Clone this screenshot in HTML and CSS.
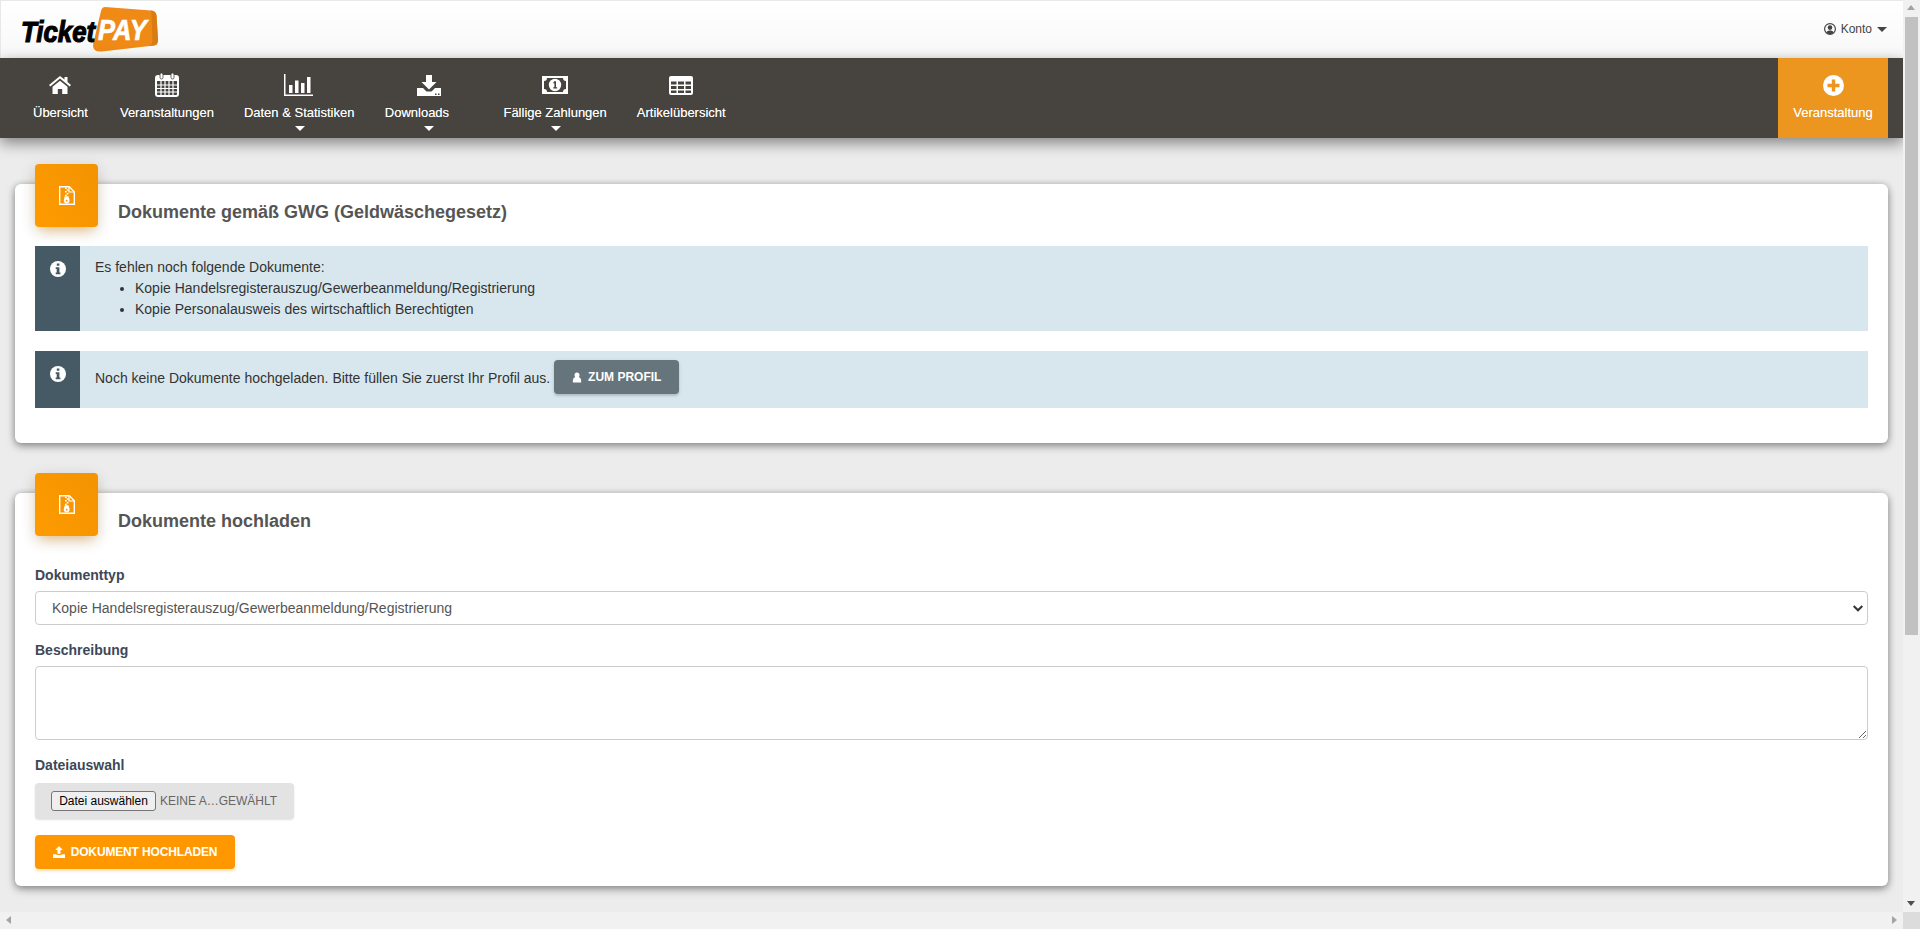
FILE: index.html
```html
<!DOCTYPE html>
<html lang="de">
<head>
<meta charset="utf-8">
<title>TicketPAY – Dokumente</title>
<link rel="stylesheet" href="styles.css">
</head>
<body>
<svg class="defs" width="0" height="0" aria-hidden="true">
  <symbol id="i-zip" viewBox="0 0 16 19">
    <path fill="none" stroke="currentColor" stroke-width="1.4" d="M.7.7h9.600l5 5v12.600H.7z"/>
    <path fill="none" stroke="currentColor" stroke-width="1.200" d="M10 1v5h5"/>
    <path fill="currentColor" d="M6 1.500h1.700v1.500H6zM7.700 3.300h1.700v1.500H7.700zM6 5.100h1.700v1.500H6zM7.700 6.900h1.700v1.500H7.700zM6 8.700h1.700v1.300H6z"/>
    <path fill="currentColor" d="M5.800 10.200h3.700l1 3.800a2.900 2.900 0 1 1-5.700 0z"/>
    <circle cx="7.650" cy="14.700" r=".9" fill="#fb9800"/>
  </symbol>
  <symbol id="i-info" viewBox="0 0 16 16">
    <circle cx="8" cy="8" r="8" fill="#fff"/>
    <path fill="#465a65" d="M6.800 2.600h2.600v2.200H6.800zM5.700 6.200h3.700v5.300h1v1.700H5.700v-1.700h1V7.900h-1z"/>
  </symbol>
  <symbol id="i-user" viewBox="0 0 12 12">
    <circle cx="6" cy="3" r="3" fill="currentColor"/>
    <path fill="currentColor" d="M1 12V9.500C1 7.500 2.500 6 4 5.500h4C9.500 6 11 7.500 11 9.500V12z"/>
  </symbol>
  <symbol id="i-upload" viewBox="0 0 12 12">
    <path fill="currentColor" d="M6 0l3.800 4H7.500v3.800h-3V4H2.200zM0 8.200h3.500v.8h5v-.8H12V12H0z"/>
  </symbol>
</svg>

<div class="frame">
  <div class="viewport">
    <header class="topbar">
      <a class="logo" href="#" aria-label="TicketPAY">
        <svg width="145" height="50" viewBox="0 0 145 50">
          <path fill="#ef8a17" d="M88 2 134 5.500q5 .5 5.500 5L141 35q0 5-4 5.500L85 46.500q-9 .8-9-6 0-2 1-5L84 6q1-4 4-4z"/>
          <path fill="#d97c12" d="M134 5.500q5 .5 5.500 5L141 35q0 5-4 5.500l-6 .7q4-.7 4.500-5L134.500 10q0-3-.5-4.500z"/>
          <text class="logo-ticket" transform="translate(4 37) scale(.86 1)">Ticket</text>
          <text class="logo-pay" transform="translate(81 35) scale(.88 1)">PAY</text>
        </svg>
      </a>
      <a class="account" href="#">
        <svg class="account-icon" width="12" height="12" viewBox="0 0 12 12"><circle cx="6" cy="6" r="5.400" fill="none" stroke="currentColor" stroke-width="1.200"/><circle cx="6" cy="4.600" r="2.300" fill="currentColor"/><path fill="currentColor" d="M2.300 9.600C3 7.800 4.500 7.400 6 7.400s3 .4 3.700 2.200C8.700 10.700 7.400 11.200 6 11.200s-2.700-.5-3.700-1.600z"/></svg>
        <span>Konto</span>
        <span class="caret-dark"></span>
      </a>
    </header>

    <nav class="mainnav">
      <div class="nav-items">
        <a class="nav-item nav-first" href="#">
          <span class="nav-icon"><svg width="22" height="18" viewBox="0 0 22 18"><path fill="#fff" d="M11 0 0 9l1.300 1.500L11 2.600l9.700 7.900L22 9l-3.500-2.900V1h-3v2.600z"/><path fill="#fff" d="M3.500 10.800 11 4.700l7.500 6.100V18h-5.300v-5H8.800v5H3.500z"/></svg></span>
          <span class="nav-label">Übersicht</span>
        </a>
        <a class="nav-item" href="#">
          <span class="nav-icon"><svg width="24" height="24" viewBox="0 0 24 24"><rect x="1" y="3" width="22" height="20" rx="2" fill="none" stroke="#fff" stroke-width="2"/><rect x="1" y="3" width="22" height="5" fill="#fff"/><path fill="none" stroke="#fff" stroke-width="1.200" d="M2 12h20M2 15.500h20M2 19h20M6 8v14M10 8v14M14 8v14M18 8v14"/><rect x="5" y="0" width="3" height="6" rx="1.500" fill="#fff" stroke="#47433e" stroke-width=".8"/><rect x="16" y="0" width="3" height="6" rx="1.500" fill="#fff" stroke="#47433e" stroke-width=".8"/></svg></span>
          <span class="nav-label">Veranstaltungen</span>
        </a>
        <a class="nav-item" href="#">
          <span class="nav-icon"><svg width="30" height="22" viewBox="0 0 30 22"><path fill="#fff" d="M0 0h1.500v20.500H29V22H0z"/><path fill="#fff" d="M5 11h3.500v8H5zM11 6.500h3.500V19H11zM17 9h3.500v10H17zM23 3h3.500v16H23z"/></svg></span>
          <span class="nav-label">Daten &amp; Statistiken</span>
          <span class="caret-light"></span>
        </a>
        <a class="nav-item nav-wide" href="#">
          <span class="nav-icon"><svg width="24" height="21" viewBox="0 0 24 21"><path fill="#fff" d="M9 0h6v7h4.500L12 14.500 4.500 7H9z"/><path fill="#fff" d="M0 13h6l3.500 3.500h5L18 13h6v8H0z"/><path fill="#47433e" d="M18 18.500h1.500V20H18zM21 18.500h1.500V20H21z"/></svg></span>
          <span class="nav-label nav-label-shift">Downloads</span>
          <span class="caret-light"></span>
        </a>
        <a class="nav-item" href="#">
          <span class="nav-icon"><svg width="26" height="18" viewBox="0 0 26 18"><path fill="#fff" fill-rule="evenodd" d="M0 0h26v18H0zM2 5v8a3 3 0 0 1 3 3h16a3 3 0 0 1 3-3V5a3 3 0 0 1-3-3H5a3 3 0 0 1-3 3z"/><circle cx="13" cy="9" r="6.200" fill="#fff"/><path fill="#47433e" d="M12.300 5.300h1.700v6h1.100v1.200h-3.800v-1.200h1.100V7.300h-1.100v-.9z"/></svg></span>
          <span class="nav-label">Fällige Zahlungen</span>
          <span class="caret-light"></span>
        </a>
        <a class="nav-item" href="#">
          <span class="nav-icon"><svg width="24" height="19" viewBox="0 0 24 19"><path fill="#fff" fill-rule="evenodd" d="M2 0h20a2 2 0 0 1 2 2v15a2 2 0 0 1-2 2H2a2 2 0 0 1-2-2V2a2 2 0 0 1 2-2zM2 5.500v3h5.500v-3zM9 5.500v3h6v-3zM16.500 5.500v3H22v-3zM2 10v3h5.500v-3zM9 10v3h6v-3zM16.500 10v3H22v-3zM2 14.500V17h5.500v-2.500zM9 14.500V17h6v-2.500zM16.500 14.500V17H22v-2.500z"/></svg></span>
          <span class="nav-label">Artikelübersicht</span>
        </a>
      </div>
      <a class="nav-cta" href="#">
        <span class="nav-icon"><svg width="21" height="21" viewBox="0 0 21 21"><circle cx="10.500" cy="10.500" r="10.500" fill="#fff"/><path fill="#ec951f" d="M8.800 4.500h3.400v4.300h4.300v3.400h-4.300v4.300H8.800v-4.300H4.500V8.800h4.300z"/></svg></span>
        <span class="nav-label">Veranstaltung</span>
      </a>
    </nav>

    <main class="content">
      <section class="card card-status">
        <div class="card-head">
          <div class="card-badge"><svg width="16" height="19"><use href="#i-zip"/></svg></div>
          <h2 class="card-title">Dokumente gemäß GWG (Geldwäschegesetz)</h2>
        </div>
        <div class="alert alert-list">
          <div class="alert-side"><svg width="16" height="16"><use href="#i-info"/></svg></div>
          <div class="alert-body">
            Es fehlen noch folgende Dokumente:
            <ul class="alert-ul">
              <li>Kopie Handelsregisterauszug/Gewerbeanmeldung/Registrierung</li>
              <li>Kopie Personalausweis des wirtschaftlich Berechtigten</li>
            </ul>
          </div>
        </div>
        <div class="alert alert-action">
          <div class="alert-side"><svg width="16" height="16"><use href="#i-info"/></svg></div>
          <div class="alert-body alert-row">
            <span>Noch keine Dokumente hochgeladen. Bitte füllen Sie zuerst Ihr Profil aus.</span>
            <a class="btn btn-grey" href="#"><svg width="10" height="11"><use href="#i-user"/></svg>ZUM PROFIL</a>
          </div>
        </div>
      </section>

      <section class="card card-upload">
        <div class="card-head">
          <div class="card-badge"><svg width="16" height="19"><use href="#i-zip"/></svg></div>
          <h2 class="card-title">Dokumente hochladen</h2>
        </div>
        <form class="upload-form">
          <label class="field-label" for="doctype">Dokumenttyp</label>
          <div class="select-wrap">
            <select class="field-select" id="doctype">
              <option>Kopie Handelsregisterauszug/Gewerbeanmeldung/Registrierung</option>
            </select>
            <svg class="select-chevron" width="10" height="7" viewBox="0 0 10 7"><path fill="none" stroke="#333" stroke-width="2" d="M.7 1 5 5.300 9.300 1"/></svg>
          </div>
          <label class="field-label field-gap" for="desc">Beschreibung</label>
          <textarea class="field-area" id="desc"></textarea>
          <span class="field-label field-gap field-file-label">Dateiauswahl</span>
          <div class="file-box">
            <button class="file-btn" type="button">Datei auswählen</button>
            <span class="file-name">Keine a…gewählt</span>
          </div>
          <a class="btn btn-orange" href="#"><svg width="12" height="12"><use href="#i-upload"/></svg>DOKUMENT HOCHLADEN</a>
        </form>
      </section>
    </main>
  </div>

  <div class="vscroll">
    <span class="arrow-up"></span>
    <div class="vtrack"><div class="vthumb"></div></div>
    <span class="arrow-down"></span>
  </div>
  <div class="hscroll">
    <span class="arrow-left"></span>
    <span class="arrow-right"></span>
  </div>
  <div class="corner"></div>
</div>
</body>
</html>
```

FILE: styles.css
```css
* { box-sizing: border-box; }
html, body { margin: 0; height: 100%; overflow: hidden; }
body {
  font-family: "Liberation Sans", Arial, sans-serif;
  font-size: 14px;
  color: #333;
  background: #ececec;
}
a { text-decoration: none; color: inherit; }
.defs { position: absolute; }

.frame {
  display: grid;
  grid-template-columns: 1903px 17px;
  grid-template-rows: 912px 17px;
  height: 929px;
}
.viewport { overflow: hidden; display: flex; flex-direction: column; }

/* top bar */
.topbar {
  height: 58px;
  flex: none;
  display: flex;
  align-items: center;
  justify-content: space-between;
  border-top: 1px solid #e8e8e8;
  border-left: 1px solid #e8e8e8;
  background: linear-gradient(#fff, #f8f8f8);
  padding: 0 16px 0 16px;
}
.logo { display: block; height: 50px; margin-top: 1px; }
.logo svg { display: block; }
.logo-ticket { font: italic 700 30px "Liberation Sans", Arial, sans-serif; fill: #000; stroke: #000; stroke-width: 1.2; }
.logo-pay { font: italic 700 29px "Liberation Sans", Arial, sans-serif; fill: #fff; stroke: #fff; stroke-width: .7; }
.account { display: flex; align-items: center; font-size: 12px; color: #444; margin-bottom: 1px; }
.account-icon { margin-right: 5px; color: #444; }
.caret-dark {
  margin-left: 5px;
  margin-top: 1px;
  border: 5px solid transparent;
  border-top-color: #444;
  border-bottom: 0;
}

/* main nav */
.mainnav {
  height: 80px;
  flex: none;
  display: flex;
  justify-content: space-between;
  padding: 0 15px 0 18px;
  background: #47433e;
  box-shadow: 0 5px 14px rgba(0, 0, 0, .45);
  position: relative;
  z-index: 2;
  color: #fff;
}
.nav-items { display: flex; }
.nav-item {
  display: flex;
  flex-direction: column;
  align-items: center;
  padding: 15px 15px 0;
}
.nav-first { margin-right: 2px; }
.nav-wide { width: 119px; padding-left: 0; padding-right: 0; }
.nav-icon { height: 24px; display: flex; align-items: center; justify-content: center; }
.nav-icon svg { display: block; }
.nav-label {
  margin-top: 8px;
  line-height: 16px;
  font-size: 13px;
  white-space: nowrap;
  text-shadow: 0 0 .6px rgba(255, 255, 255, .6);
}
.nav-label-shift { padding-right: 24px; }
.caret-light {
  margin-top: 5px;
  margin-left: 1px;
  border: 5px solid transparent;
  border-top-color: #fff;
  border-bottom: 0;
}
.nav-cta {
  width: 110px;
  display: flex;
  flex-direction: column;
  align-items: center;
  padding-top: 15px;
  background: #ec951f;
}

/* cards */
.content { padding: 46px 15px 0; }
.card {
  background: #fff;
  border-radius: 6px;
  padding: 0 20px;
  box-shadow: 0 3px 8px rgba(0, 0, 0, .4), 0 0 6px rgba(0, 0, 0, .12);
}
.card-status { padding-bottom: 35px; margin-bottom: 50px; }
.card-upload { padding-bottom: 17px; }
.card-head { display: flex; height: 43px; }
.card-badge {
  width: 63px;
  height: 63px;
  margin-top: -20px;
  flex: none;
  display: flex;
  align-items: center;
  justify-content: center;
  border-radius: 4px;
  color: #fff;
  background: linear-gradient(60deg, #ff9b00, #f29300);
  box-shadow: 0 4px 16px rgba(0, 0, 0, .14), 0 7px 12px -5px rgba(255, 152, 0, .45);
}
.card-title {
  margin: 18px 0 0 20px;
  font-size: 18px;
  line-height: 20px;
  font-weight: 700;
  color: #555;
  white-space: nowrap;
}

/* alerts */
.alert { display: flex; background: #d8e7ee; color: #333; line-height: 21px; }
.alert-list { margin-top: 19px; height: 85px; }
.alert-action { margin-top: 20px; height: 57px; }
.alert-side {
  width: 45px;
  flex: none;
  background: #465a65;
  display: flex;
  justify-content: center;
  padding-top: 15px;
}
.alert-side svg { display: block; }
.alert-body { padding: 11px 15px; flex: 1; }
.alert-ul { margin: 0; padding: 0 0 0 40px; }
.alert-row { display: flex; align-items: flex-start; padding-top: 9px; padding-bottom: 0; }
.alert-row span { margin-top: 8px; }

/* buttons */
.btn {
  display: inline-flex;
  align-items: center;
  justify-content: center;
  height: 34px;
  border-radius: 4px;
  color: #fff;
  font-size: 12px;
  font-weight: 700;
  box-shadow: 0 2px 2px rgba(0, 0, 0, .12), 0 1px 4px rgba(0, 0, 0, .1);
}
.btn svg { margin-right: 6px; }
.btn-grey { width: 125px; margin-left: 4px; background: #66747b; }
.btn-orange {
  width: 200px;
  margin-top: 16px;
  background: #ff9800;
  letter-spacing: -.15px;
  box-shadow: 0 2px 3px rgba(255, 152, 0, .3);
}

/* form */
.upload-form { display: flex; flex-direction: column; align-items: flex-start; padding-top: 31px; }
.field-label { display: block; line-height: 16px; font-size: 14px; font-weight: 700; color: #3c4858; margin-bottom: 8px; }
.field-gap { margin-top: 17px; }
.field-file-label { margin-bottom: 10px; }
.select-wrap { position: relative; width: 100%; }
.field-select {
  display: block;
  width: 100%;
  height: 34px;
  padding: 0 16px;
  appearance: none;
  background: #fff;
  border: 1px solid #ccc;
  border-radius: 4px;
  font: 14px "Liberation Sans", Arial, sans-serif;
  color: #555;
}
.select-chevron { position: absolute; right: 5px; top: 14px; }
.field-area {
  display: block;
  width: 100%;
  height: 74px;
  border: 1px solid #ccc;
  border-radius: 4px;
  background: #fff;
  resize: vertical;
}
.file-box {
  display: flex;
  align-items: center;
  width: 259px;
  height: 36px;
  padding-left: 16px;
  background: #e3e3e3;
  border-radius: 4px;
  box-shadow: 0 1px 2px rgba(0, 0, 0, .12);
}
.file-btn {
  width: 105px;
  height: 20px;
  padding: 0;
  background: #efefef;
  border: 1px solid #767676;
  border-radius: 3px;
  font: 12px "Liberation Sans", Arial, sans-serif;
  color: #000;
}
.file-name { margin-left: 4px; font-size: 12px; color: #666; text-transform: uppercase; white-space: nowrap; }

/* window scrollbars */
.vscroll { grid-row: 1; grid-column: 2; background: #f1f1f1; display: flex; flex-direction: column; align-items: center; }
.vtrack { flex: 1; width: 100%; padding: 0 2px; }
.vthumb { height: 618px; background: #c1c1c1; }
.arrow-up, .arrow-down { flex: none; height: 17px; width: 100%; position: relative; }
.arrow-up::after, .arrow-down::after, .arrow-left::after, .arrow-right::after { content: ""; position: absolute; border: 4px solid transparent; }
.arrow-up::after { left: 4px; top: 5px; border-bottom-color: #a3a3a3; border-width: 0 4.500px 5px; }
.arrow-down::after { left: 4px; top: 6px; border-top-color: #505050; border-width: 5px 4.500px 0; }
.hscroll { grid-row: 2; grid-column: 1; background: #f1f1f1; display: flex; justify-content: space-between; }
.arrow-left, .arrow-right { width: 17px; height: 17px; position: relative; }
.arrow-left::after { left: 6px; top: 4px; border-right-color: #a3a3a3; border-width: 4.500px 5px 4.500px 0; }
.arrow-right::after { left: 6px; top: 4px; border-left-color: #a3a3a3; border-width: 4.500px 0 4.500px 5px; }
.corner { grid-row: 2; grid-column: 2; background: #dcdcdc; }
```
